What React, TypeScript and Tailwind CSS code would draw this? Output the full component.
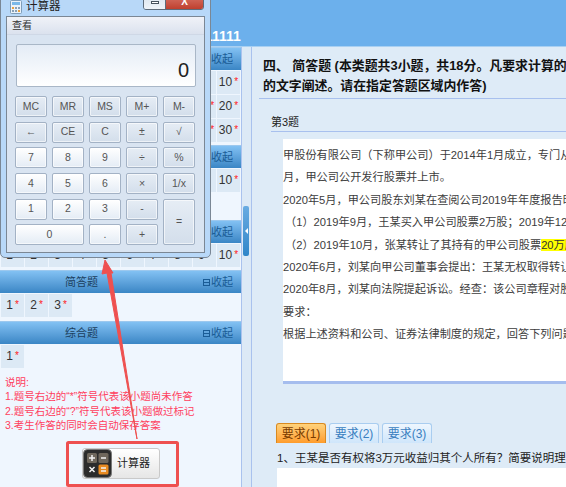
const Font = '[font-family:"Liberation_Sans","Noto_Sans_CJK_SC",sans-serif]';

function Cell({ n }: { n?: number }) {
  return (
    <div className="w-[23px] h-[23px] bg-[#dce9f5] flex items-center justify-center text-[12px] leading-[20px] pb-[2px] text-[#333] gap-[2px]">
      <span>{n}</span>
      <span className="text-[#ff2020] text-[10px]">*</span>
    </div>
  );
}

function Section({ title, nums, extra }: { title: string; nums: number[]; extra?: string }) {
  return (
    <section className={extra}>
      <div className="h-[23px] flex items-center justify-between pl-[65px] pr-[8px] bg-gradient-to-b from-[#82c1f3] to-[#3a86c5] border-t border-[#9cc8ee] text-[11px]">
        <span className="text-[#1c3f5e]">{title}</span>
        <span className="flex items-center gap-[1px] text-[#1a5c96]">
          <span className="w-[7px] h-[7px] border border-[#1a5c96] flex items-center justify-center">
            <span className="block w-[5px] h-px bg-[#1a5c96]" />
          </span>
          收起
        </span>
      </div>
      <div className="flex flex-wrap gap-[1px] pl-[1px] pt-[1px]">
        {nums.map((n) => (
          <Cell key={n} n={n} />
        ))}
      </div>
    </section>
  );
}

const range = (a: number, b: number) => Array.from({ length: b - a + 1 }, (_, i) => a + i);

function CalcKey({ label, cls = "", light = false }: { label: string; cls?: string; light?: boolean }) {
  return (
    <div
      className={
        "flex items-center justify-center rounded-[2px] border border-[#a3b2c5] text-[10.5px] text-[#555] shadow-[inset_0_0_0_1px_rgba(255,255,255,0.6)] " +
        (light ? "bg-gradient-to-b from-[#ffffff] to-[#e4ecf5] " : "bg-gradient-to-b from-[#e6edf5] to-[#d3deeb] ") +
        cls
      }
    >
      {label}
    </div>
  );
}

function Calculator() {
  return (
    <div className="absolute left-0 top-[-8px] w-[211px] h-[266px] rounded-b-[5px] bg-[#b8d8f8] border border-[#7a8795] flex flex-col px-[5px] pb-[4px] pt-0 z-10">
      <div className="h-[23px] flex items-center justify-between shrink-0">
        <div className="flex items-center gap-[4px] pl-[4px] pt-[4px]">
          <svg width="12" height="14" viewBox="0 0 12 14">
            <rect x="0.5" y="0.5" width="11" height="13" rx="1" fill="#eaf2fa" stroke="#7f9db8" />
            <rect x="2" y="2" width="8" height="3" fill="#7ab8e8" />
            <rect x="2" y="7" width="2" height="2" fill="#e8a040" />
            <rect x="5" y="7" width="2" height="2" fill="#8aa0b5" />
            <rect x="8" y="7" width="2" height="2" fill="#8aa0b5" />
            <rect x="2" y="10" width="2" height="2" fill="#8aa0b5" />
            <rect x="5" y="10" width="2" height="2" fill="#8aa0b5" />
            <rect x="8" y="10" width="2" height="2" fill="#e8a040" />
          </svg>
          <span className="text-[11.5px] text-[#222]">计算器</span>
        </div>
        <div className="flex self-start mr-[1px] h-[17px] rounded-b-[3px] border border-[#5d6b7a] overflow-hidden">
          <div className="w-[22px] bg-gradient-to-b from-[#d8e2ec] to-[#eef3f8] border-r border-[#5d6b7a] flex items-end justify-center pb-[5px]">
            <span className="block w-[8px] h-[3px] bg-white border border-[#46525e]" />
          </div>
          <div className="w-[37px] bg-gradient-to-b from-[#d9766a] to-[#bf3f2e] flex items-end justify-center text-white text-[10px] leading-[15px] font-bold">
            X
          </div>
        </div>
      </div>
      <div className="flex-1 border border-[#7b8794] bg-[#d9e4f1] flex flex-col">
        <div className="h-[18px] bg-gradient-to-b from-[#f0f2f8] to-[#dbe2ee] border-b border-[#cfd8e6] flex items-center pl-[5px] text-[10px] text-[#333] shrink-0">
          查看
        </div>
        <div className="px-[8px] pt-[9px]">
          <div className="h-[43px] ml-[1px] rounded-[2px] border border-[#a9b7c7] bg-gradient-to-b from-[#e4ecf6] to-[#ffffff] flex items-end justify-end pr-[6px] pb-[3px] text-[20px] leading-[26px] text-[#222]">
            0
          </div>
          <div className="grid grid-cols-[repeat(5,32px)] grid-rows-[repeat(6,21px)] gap-x-[5px] gap-y-[4.7px] mt-[9px]">
            {["MC", "MR", "MS", "M+", "M-", "←", "CE", "C", "±", "√"].map((k) => (
              <CalcKey key={k} label={k} />
            ))}
            <CalcKey label="7" light />
            <CalcKey label="8" light />
            <CalcKey label="9" light />
            <CalcKey label="÷" />
            <CalcKey label="%" />
            <CalcKey label="4" light />
            <CalcKey label="5" light />
            <CalcKey label="6" light />
            <CalcKey label="×" />
            <CalcKey label="1/x" />
            <CalcKey label="1" light />
            <CalcKey label="2" light />
            <CalcKey label="3" light />
            <CalcKey label="-" />
            <CalcKey label="=" cls="row-span-2" />
            <CalcKey label="0" light cls="col-span-2" />
            <CalcKey label="." light />
            <CalcKey label="+" />
          </div>
        </div>
      </div>
    </div>
  );
}

const para = [
  "甲股份有限公司（下称甲公司）于2014年1月成立，专门从事新能源汽车的研发和生产。2019年",
  "月，甲公司公开发行股票并上市。",
  "2020年5月，甲公司股东刘某在查阅公司2019年年度报告时发现以下情况：",
  "（1）2019年9月，王某买入甲公司股票2万股；2019年12月卖出，获利3万元。",
  null,
  "2020年6月，刘某向甲公司董事会提出：王某无权取得转让收益，应归公司所有。",
  "2020年8月，刘某向法院提起诉讼。经查：该公司章程对股东权利未作特别规定。",
  "要求：",
  "根据上述资料和公司、证券法律制度的规定，回答下列问题。",
];

export default function App() {
  return (
    <div className={"relative w-[566px] h-[487px] overflow-hidden flex flex-col bg-[#deebf7] " + Font}>
      <Calculator />
      <header className="h-[47px] shrink-0 bg-[#6cb0ec] border-b border-[#a9d0f2] flex items-end pl-[184px] text-white font-bold text-[14px] leading-[19px] whitespace-nowrap">
        11111111
      </header>
      <div className="flex-1 flex min-h-0">
        <aside className="w-[242px] shrink-0 bg-[#eff6fe] border-r border-[#a9c2ee]">
          <Section title="单选题" nums={range(1, 30)} extra="h-[98px]" />
          <Section title="多选题" nums={range(1, 10)} extra="h-[75px]" />
          <Section title="判断题" nums={range(1, 10)} extra="h-[50px]" />
          <Section title="简答题" nums={[1, 2, 3]} extra="h-[51px]" />
          <Section title="综合题" nums={[1]} />
          <div className="pl-[5px] pt-[7px] text-[10.5px] leading-[14.4px] text-[#ff3f5f] whitespace-nowrap">
            <p>说明:</p>
            <p>1.题号右边的“*”符号代表该小题尚未作答</p>
            <p>2.题号右边的“?”符号代表该小题做过标记</p>
            <p>3.考生作答的同时会自动保存答案</p>
          </div>
          <div className="ml-[82px] mt-[15px] w-[78px] h-[31px] rounded-[3px] border border-[#c9c9c9] bg-gradient-to-b from-[#ffffff] to-[#e6e6e6] flex items-center gap-[5px] text-[11px] text-[#222]">
            <svg width="29" height="29" viewBox="0 0 29 29" className="shrink-0">
              <rect x="0.5" y="0.5" width="28" height="28" rx="4" fill="#2c2c2c" stroke="#777" />
              <rect x="4" y="4" width="10" height="10" rx="1.5" fill="#6f675c" />
              <rect x="15.5" y="4" width="10" height="10" rx="1.5" fill="#6f675c" />
              <rect x="4" y="15.5" width="10" height="10" rx="1.5" fill="#2b2b2b" />
              <rect x="15.5" y="15.5" width="10" height="10" rx="1.5" fill="#e88a20" />
              <path d="M9 6v6M6 9h6M18 9h5M6.5 18l5 5M11.5 18l-5 5M18 19h5M18 22h5" stroke="#f2f2f2" strokeWidth="1.5" />
            </svg>
            计算器
          </div>
        </aside>
        <div className="w-[10px] shrink-0 bg-[#dce9f6] border-r border-[#a9c2ee] flex">
          <div className="ml-[1px] mt-[159px] w-[6px] h-[50px] rounded-[2px] bg-gradient-to-b from-[#68abe2] to-[#2f86c9] flex items-center justify-center">
            <span className="block w-0 h-0 border-y-[3px] border-y-transparent border-r-[3px] border-r-white" />
          </div>
        </div>
        <main className="flex-1 min-w-0 overflow-hidden pl-[7px] whitespace-nowrap">
          <div className="border-b border-[#a8c0ee] h-[52px] pl-[4px] pt-[9px] text-[12.9px] leading-[20px] font-bold text-[#111]">
            <p>四、 简答题 (本类题共3小题，共18分。凡要求计算的，应列出必要的计算过程；计算结果</p>
            <p>的文字阐述。请在指定答题区域内作答)</p>
          </div>
          <div className="ml-[12px]">
            <div className="h-[33px] border-b border-[#a8c0ee] flex items-center text-[11px] text-[#222] pt-[14px]">
              第3题
            </div>
            <div className="ml-[12px] mt-[7px] h-[245px] bg-white border-b-[3px] border-[#a5bdee] pt-[5px] text-[11.2px] leading-[22.4px] text-[#3c3c3c] overflow-hidden">
              {para.map((t, i) =>
                t === null ? (
                  <p key={i} className="pl-[2px]">
                    （2）2019年10月，张某转让了其持有的甲公司股票<span className="bg-[#ffff00] text-[#333]">20万股</span>，获利50万元。
                  </p>
                ) : (
                  <p key={i} className={t.startsWith("（1") ? "pl-[2px]" : ""}>
                    {t}
                  </p>
                )
              )}
            </div>
          </div>
          <div className="ml-[17px] mt-[39px] flex items-end gap-[3px] h-[20px] text-[12px]">
            <div className="w-[50px] h-[20px] rounded-t-[3px] border border-[#d98a20] border-b-0 bg-gradient-to-b from-[#ffd27a] to-[#ff9c2a] text-[#7a3c00] flex items-center justify-center">
              要求(1)
            </div>
            <div className="w-[50px] h-[20px] rounded-t-[3px] border border-[#a9cdf0] border-b-0 bg-gradient-to-b from-[#eef6fe] to-[#cfe6fb] text-[#3a7fc0] flex items-center justify-center">
              要求(2)
            </div>
            <div className="w-[50px] h-[20px] rounded-t-[3px] border border-[#a9cdf0] border-b-0 bg-gradient-to-b from-[#eef6fe] to-[#cfe6fb] text-[#3a7fc0] flex items-center justify-center">
              要求(3)
            </div>
          </div>
          <p className="ml-[18px] mt-[7px] text-[11.5px] leading-[16px] text-[#222]">
            1、王某是否有权将3万元收益归其个人所有？简要说明理由。
          </p>
          <div className="ml-[18px] mt-[2px] h-[30px] bg-white" />
        </main>
      </div>
      <svg className="absolute left-0 top-0 z-20 pointer-events-none" width="566" height="487" viewBox="0 0 566 487">
        <rect x="67.5" y="442.5" width="110" height="43" rx="1" fill="none" stroke="#ee5050" strokeWidth="3" />
        <path d="M137 439 L111 273 L113 273 L105 260 L102 274 L107 273 Z" fill="#ee5050" stroke="#ee5050" strokeWidth="1" />
      </svg>
    </div>
  );
}
